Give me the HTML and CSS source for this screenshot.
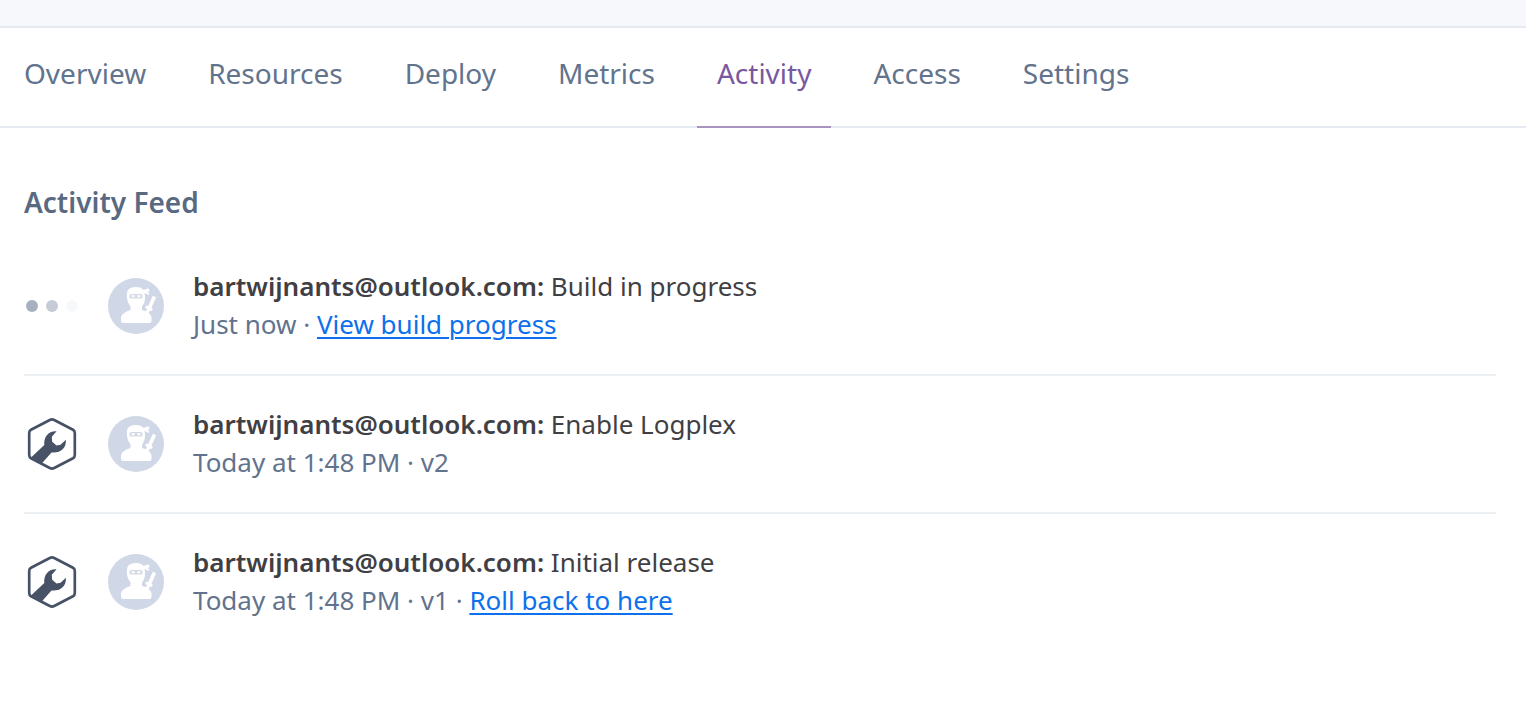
FILE: index.html
```html
<!DOCTYPE html>
<html lang="en">
<head>
<meta charset="utf-8">
<title>Activity</title>
<link rel="stylesheet" href="styles.css">
</head>
<body>
<svg class="sprites" aria-hidden="true">
  <symbol id="avatar" viewBox="0 0 56 56">
    <circle cx="28" cy="28" r="28" fill="#d0d7e6"/>
    <path fill="#fff" d="M19 15C19.500 11 23 9 28 9C31.500 9 34 10 35.500 12L40.500 10.300L41.700 13L39.500 14.200L41.500 15.500L40.500 17L36.500 14.800C37.500 20 37.200 25 34 28.500V32C38 33 43 35.500 43.500 39.500V42.500Q43.500 45 41 45H15.500Q13 45 13 42.500V39.500C13.500 35.500 19 33 22.500 32V28.500C19.500 25 18.300 20 19 15Z"/>
    <path fill="#fff" d="M45 17.500L48 19.500L43.500 29.500L44.800 31L43.800 33L42 32.500L40.500 35.500L37.500 34L39 31L37.200 29.500L38 27.800L40.200 28Z"/>
    <rect x="21.500" y="16" width="13" height="4.500" rx="1.500" fill="#d5dbe6"/>
    <path fill="#fff" d="M23.200 17.300H27L26.300 19.300H24ZM29 17.300H32.800L32 19.300H29.700Z"/>
  </symbol>
  <symbol id="wrench" viewBox="0 0 56 56">
    <path fill="none" stroke="#475266" stroke-width="2.700" stroke-linejoin="round" d="M25.800 4Q28 2.900 30.200 4L49 13.800Q50.800 14.800 50.800 17V39Q50.800 41.200 49 42.200L30.200 52Q28 53.100 25.800 52L7 42.200Q5.200 41.200 5.200 39V17Q5.200 14.800 7 13.800Z"/>
    <path fill="#475266" d="M7 41.500L20.300 29C19.500 21 24.500 14.600 32.600 15.200L27.800 20.800L28.200 25.800L32.500 29.500L36.600 28.800L41.900 23.800C42.500 32 36.500 37.500 27.500 36.500L17.500 47.800Z"/>
  </symbol>
</svg>
<header class="app-header"></header>
<nav class="tabs" aria-label="App sections">
  <a class="tab" href="#overview">Overview</a>
  <a class="tab" href="#resources">Resources</a>
  <a class="tab" href="#deploy">Deploy</a>
  <a class="tab" href="#metrics">Metrics</a>
  <a class="tab tab-active" href="#activity" aria-current="page">Activity</a>
  <a class="tab" href="#access">Access</a>
  <a class="tab" href="#settings">Settings</a>
</nav>
<main class="content">
  <h1 class="title">Activity Feed</h1>
  <ul class="feed">
    <li class="event">
      <span class="status pending"><i class="dot"></i><i class="dot dot-mid"></i><i class="dot dot-faint"></i></span>
      <svg class="avatar" aria-hidden="true"><use href="#avatar"/></svg>
      <div class="details">
        <p class="summary"><strong>bartwijnants@outlook.com:</strong> Build in progress</p>
        <p class="meta">Just now · <a class="link" href="#build">View build progress</a></p>
      </div>
    </li>
    <li class="event">
      <svg class="status" aria-hidden="true"><use href="#wrench"/></svg>
      <svg class="avatar" aria-hidden="true"><use href="#avatar"/></svg>
      <div class="details">
        <p class="summary"><strong>bartwijnants@outlook.com:</strong> Enable Logplex</p>
        <p class="meta">Today at 1:48 PM · v2</p>
      </div>
    </li>
    <li class="event">
      <svg class="status" aria-hidden="true"><use href="#wrench"/></svg>
      <svg class="avatar" aria-hidden="true"><use href="#avatar"/></svg>
      <div class="details">
        <p class="summary"><strong>bartwijnants@outlook.com:</strong> Initial release</p>
        <p class="meta">Today at 1:48 PM · v1 · <a class="link" href="#rollback">Roll back to here</a></p>
      </div>
    </li>
  </ul>
</main>
</body>
</html>
```
FILE: styles.css
```css
* { box-sizing: border-box; }
body {
  margin: 0;
  background: #fff;
  color: #3f3f44;
  font-family: "Noto Sans", "Open Sans", sans-serif;
  font-size: 26px;
  line-height: 38px;
}
.sprites { display: none; }
.app-header {
  height: 28px;
  background: #f7f8fc;
  border-bottom: 2px solid #e6eaf3;
}
.tabs {
  display: flex;
  gap: 22px;
  padding: 0 4px;
  box-shadow: inset 0 -2px #e6eaf3;
}
.tab {
  padding: 26px 20px 34px;
  border-bottom: 2px solid transparent;
  color: #62738d;
  font-size: 28px;
  text-decoration: none;
}
.tab-active {
  border-bottom-color: #ab93c0;
  color: #79589f;
}
.content { padding: 55px 30px 56px 24px; }
.title {
  margin: 0 0 17px;
  color: #596981;
  font-size: 28px;
  font-weight: 600;
}
.feed {
  margin: 0;
  padding: 0;
  list-style: none;
}
.event {
  display: flex;
  align-items: center;
  padding: 29px 0;
  border-bottom: 2px solid #ebeef3;
}
.event:last-child { border-bottom: 0; }
.status {
  flex: none;
  width: 56px;
  height: 56px;
  margin-right: 28px;
}
.pending {
  display: flex;
  align-items: center;
  gap: 8px;
  padding-left: 2px;
}
.dot {
  width: 12px;
  height: 12px;
  border-radius: 50%;
  background: #a6b0bf;
}
.dot-mid { background: #c5ccd8; }
.dot-faint { background: #f7f8fa; }
.avatar {
  flex: none;
  width: 56px;
  height: 56px;
  margin-right: 29px;
}
.details { padding-bottom: 2px; }
.summary, .meta { margin: 0; }
.summary strong { font-weight: 600; }
.meta { color: #62738d; }
.link {
  color: #0d70ec;
  text-decoration: underline;
  text-decoration-thickness: 2px;
  text-underline-offset: 3px;
}
```
